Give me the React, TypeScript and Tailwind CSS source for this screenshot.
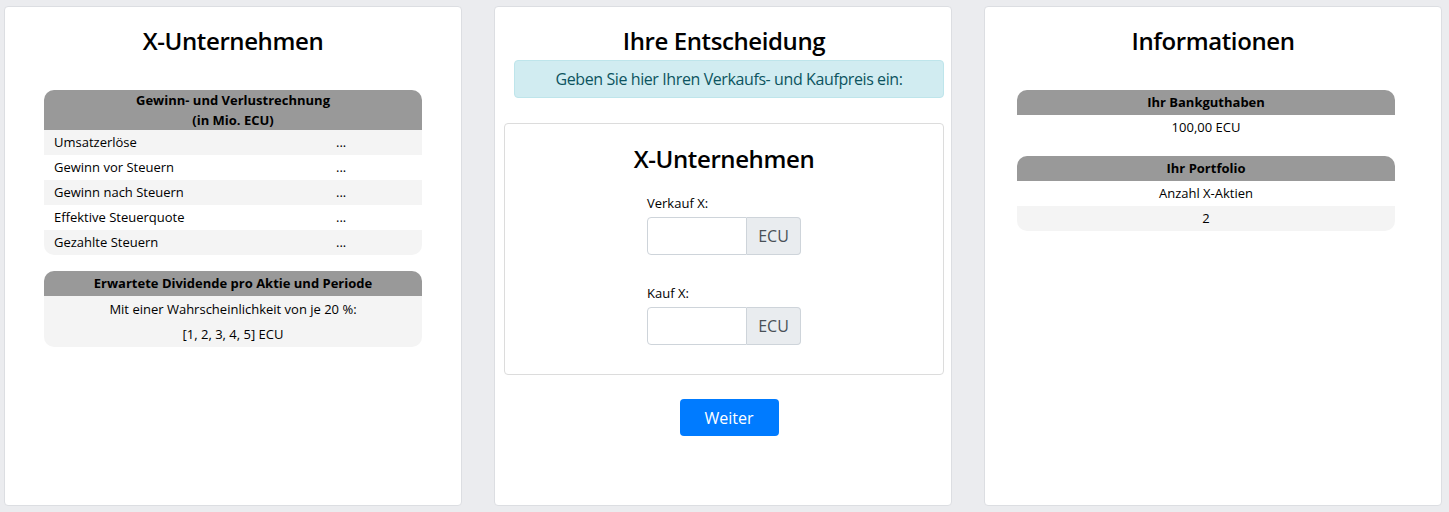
import React from "react";

const rows = [
  "Umsatzerlöse",
  "Gewinn vor Steuern",
  "Gewinn nach Steuern",
  "Effektive Steuerquote",
  "Gezahlte Steuern",
];

function PriceField({ label }: { label: string }) {
  return (
    <div>
      <label className="block text-[13px] leading-[19px] text-black">{label}</label>
      <div className="mt-[4px] flex h-[38px]">
        <input className="w-[100px] rounded-l-[4px] border border-[#ced4da] bg-white px-2 outline-none" />
        <span className="flex w-[54px] items-center justify-center rounded-r-[4px] border border-l-0 border-[#ced4da] bg-[#e9ecef] text-[16px] text-[#495057]">
          ECU
        </span>
      </div>
    </div>
  );
}

export default function App() {
  return (
    <div className="flex min-h-[512px] gap-[32px] bg-[#ebecef] pl-[4px] pt-[6px] font-['Open_Sans',sans-serif] text-black">
      {/* Company card */}
      <div className="h-[500px] w-[458px] rounded-[4px] border border-[#dcdee2] bg-white pt-[19px]">
        <h2 className="text-center text-[24px] leading-[29px] font-semibold tracking-[-0.4px]">X-Unternehmen</h2>
        <div className="mx-[39px] mt-[35px] text-[13px]">
          <div className="rounded-t-[10px] bg-[#999999] text-center font-bold leading-[20px]">
            Gewinn- und Verlustrechnung
            <br />
            (in Mio. ECU)
          </div>
          {rows.map((r, i) => (
            <div
              key={r}
              className={
                "flex h-[25px] items-center pt-[1px] " +
                (i % 2 === 0 ? "bg-[#f4f4f4]" : "bg-white") +
                (i === rows.length - 1 ? " rounded-b-[10px]" : "")
              }
            >
              <span className="w-[292px] pl-[10px]">{r}</span>
              <span>...</span>
            </div>
          ))}
          <div className="mt-[16px] rounded-t-[10px] bg-[#999999] text-center font-bold leading-[25px]">
            Erwartete Dividende pro Aktie und Periode
          </div>
          <div className="rounded-b-[10px] bg-[#f4f4f4] pt-[1px] text-center leading-[25px]">
            <div>Mit einer Wahrscheinlichkeit von je 20 %:</div>
            <div>[1, 2, 3, 4, 5] ECU</div>
          </div>
        </div>
      </div>

      {/* Decision card */}
      <div className="h-[500px] w-[458px] rounded-[4px] border border-[#dcdee2] bg-white pl-[9px] pr-[7px] pt-[19px]">
        <h2 className="text-center text-[24px] leading-[29px] font-semibold tracking-[-0.4px]">Ihre Entscheidung</h2>
        <div className="ml-[10px] mt-[5px] rounded-[4px] border border-[#bee5eb] bg-[#d1ecf1] py-[6px] text-center text-[16px] leading-[24px] tracking-[-0.4px] text-[#0c5460]">
          Geben Sie hier Ihren Verkaufs- und Kaufpreis ein:
        </div>
        <div className="mt-[25px] rounded-[4px] border border-[#dcdcdc] pb-[29px] pt-[20px]">
          <h3 className="text-center text-[24px] leading-[29px] font-semibold tracking-[-0.4px]">X-Unternehmen</h3>
          <div className="mx-auto mt-[21px] flex w-[154px] flex-col gap-[29px]">
            <PriceField label="Verkauf X:" />
            <PriceField label="Kauf X:" />
          </div>
        </div>
        <div className="mt-[24px] flex justify-center pl-[10px]">
          <button className="h-[37px] w-[99px] rounded-[4px] bg-[#007bff] text-[16px] text-white">Weiter</button>
        </div>
      </div>

      {/* Info card */}
      <div className="h-[500px] w-[458px] rounded-[4px] border border-[#dcdee2] bg-white pt-[19px]">
        <h2 className="text-center text-[24px] leading-[29px] font-semibold tracking-[-0.4px]">Informationen</h2>
        <div className="ml-[32px] mr-[46px] mt-[35px] text-center text-[13px] leading-[25px]">
          <div className="rounded-t-[10px] bg-[#999999] font-bold">Ihr Bankguthaben</div>
          <div className="bg-white">100,00 ECU</div>
          <div className="mt-[16px] rounded-t-[10px] bg-[#999999] font-bold">Ihr Portfolio</div>
          <div className="bg-white">Anzahl X-Aktien</div>
          <div className="rounded-b-[10px] bg-[#f4f4f4]">2</div>
        </div>
      </div>
    </div>
  );
}
